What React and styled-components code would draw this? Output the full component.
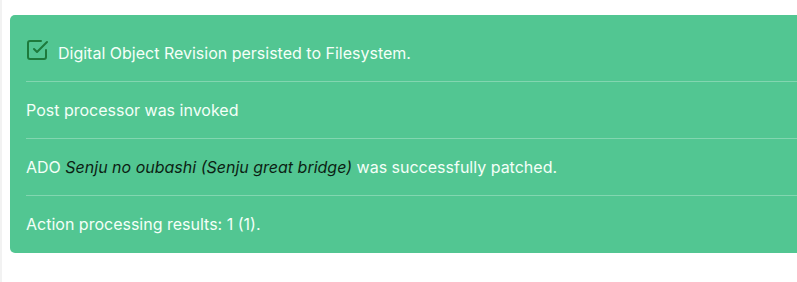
import React from "react";
import styled, { createGlobalStyle } from "styled-components";

const GlobalStyle = createGlobalStyle`
  html, body {
    margin: 0;
    padding: 0;
    background: #ffffff;
    overflow: hidden;
  }
  body {
    font-family: Inter, "Liberation Sans", Arial, sans-serif;
  }
`;

const Page = styled.div`
  min-height: 282px;
  border-left: 2px solid #f2f2f2;
  padding: 15px 0 0 8px;
  box-sizing: border-box;
`;

const Panel = styled.section`
  background-color: #52c692;
  border-radius: 5px;
  margin-right: -20px;
  padding: 10px 0 1px;
  color: #f4fff8;
`;

const Row = styled.div`
  display: flex;
  align-items: center;
  gap: 9px;
  margin-left: 16px;
  padding: 16px 0;
  min-height: 24px;
  font-size: 16px;
  line-height: 24px;
  border-bottom: ${(props) =>
    props.last ? "none" : "1px solid rgba(255, 255, 255, 0.28)"};
`;

const Icon = styled.svg`
  width: 24px;
  height: 24px;
  flex-shrink: 0;
  margin-left: -1px;
  margin-top: -6px;
`;

const Title = styled.em`
  color: #0c1f14;
`;

const CheckIcon = () => (
  <Icon
    viewBox="0 0 24 24"
    fill="none"
    stroke="#1d7a3c"
    strokeWidth="2"
    strokeLinecap="round"
    strokeLinejoin="round"
  >
    <path d="M21 12v7a2 2 0 0 1-2 2H5a2 2 0 0 1-2-2V5a2 2 0 0 1 2-2h11" />
    <path d="M9 11l3 3L22 4" />
  </Icon>
);

const App = () => {
  return (
    <Page>
      <GlobalStyle />
      <Panel>
        <Row>
          <CheckIcon />
          <span>Digital Object Revision persisted to Filesystem.</span>
        </Row>
        <Row>Post processor was invoked</Row>
        <Row>
          <span>
            ADO <Title>Senju no oubashi (Senju great bridge)</Title> was
            successfully patched.
          </span>
        </Row>
        <Row last>Action processing results: 1 (1).</Row>
      </Panel>
    </Page>
  );
};

export default App;
